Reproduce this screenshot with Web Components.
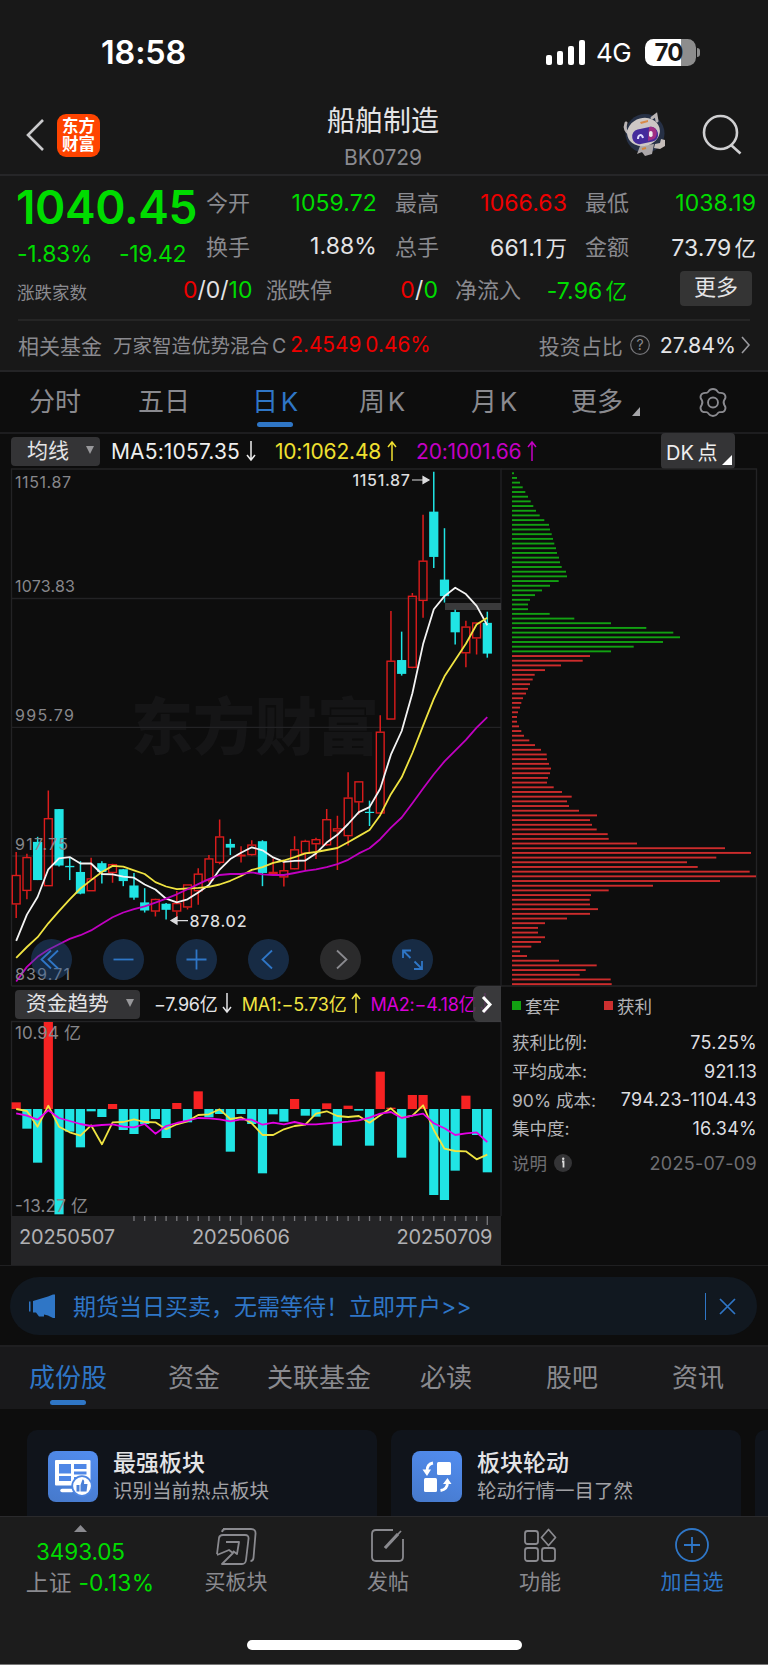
<!DOCTYPE html>
<html lang="zh-CN">
<head>
<meta charset="utf-8">
<title>船舶制造 BK0729</title>
<style>
  html, body { margin: 0; background: #0d0d0d; }
  body {
    width: 768px;
    height: 1665px;
    overflow: hidden;
    color: #e4e4e6;
    font-family: Inter, "Noto Sans CJK SC", sans-serif;
    font-size: 22px;
    --grey: #8a8a8f;
    --green: #00dc00;
    --red: #ee0000;
    --blue: #2f76c6;
    --line: #262628;
  }
</style>
</head>
<body>
<stock-page></stock-page>

<script>
// Tiny base class: every element below only has to say what it looks like
class Base extends HTMLElement {
  constructor() {
    super()
    this.attachShadow({ mode: 'open' })
  }
  connectedCallback() {
    this.shadowRoot.innerHTML = `
      <style>
        :host { display: block; box-sizing: border-box; white-space: nowrap; }
        svg { display: block; overflow: visible; }
        .g { color: var(--green); } .r { color: var(--red); }
        ${this.styles()}
      </style>
      ${this.template()}
    `
  }
  styles() { return '' }
  template() { return '' }
}

class StatusBar extends Base {
  styles() {
    return `
      :host { height: 80px; background: #181818; color: #fff; display: flex; align-items: center; padding: 24px 68px 0 101px; }
      time { font-size: 32.3px; font-weight: 600; flex: 1; letter-spacing: -.1px; }
      .net { font-size: 26px; width: 37px; margin: 0 12px 0 11px; letter-spacing: -.5px; }
      .battery { width: 51px; height: 27px; border-radius: 8.5px; background: linear-gradient(90deg, #fff 70%, #8d8d8d 70%); color: #181818; font-size: 24px; font-weight: 700; line-height: 27px; text-align: center; text-indent: -4px; letter-spacing: -.8px; }
      .tip { width: 3px; height: 9px; margin-left: 1px; border-radius: 0 4px 4px 0; background: #8d8d8d; }
    `
  }
  template() {
    return `
      <time>18:58</time>
      <svg width="39" height="25" fill="#fff">
        <rect x="0" y="15" width="6" height="10" rx="2"/><rect x="11" y="11" width="6" height="14" rx="2"/>
        <rect x="22" y="6" width="6" height="19" rx="2"/><rect x="33" y="0" width="6" height="25" rx="2"/>
      </svg>
      <span class="net">4G</span>
      <span class="battery">70</span><i class="tip"></i>
    `
  }
}

class PageNav extends Base {
  styles() {
    return `
      :host { height: 96px; background: #181818; border-bottom: 2px solid var(--line); display: grid; grid-template-columns: 57px 43px 1fr 42px 37px 65px; align-items: center; padding-top: 16px; }
      .back { margin-left: 25px; }
      .logo { width: 43px; height: 43px; border-radius: 9px; background: #ff4400; color: #fff; font-size: 16.5px; line-height: 18px; font-weight: 700; display: grid; place-content: center; text-align: center; }
      .title { text-align: center; margin-left: 102px; margin-right: 60px; }
      h1 { font-size: 28px; font-weight: 400; line-height: 34px; margin: 4px 0 0; }
      small { display: block; color: var(--grey); font-size: 21px; line-height: 24px; margin-top: 8px; letter-spacing: -.1px; }
    `
  }
  template() {
    return `
      <svg class="back" width="20" height="32" fill="none" stroke="#c9c9cb" stroke-width="2.6"><path d="M18 1 3 16l15 15"/></svg>
      <div class="logo"><span>东方</span><span>财富</span></div>
      <div class="title"><h1>船舶制造</h1><small>BK0729</small></div>
      <svg width="42" height="42" viewBox="0 0 42 42">
        <circle cx="21" cy="19.5" r="19.5" fill="#263045"/>
        <path d="M2 9c-2 5 0 9 4 11M28 4l4-3 1 6" fill="none" stroke="#b9b4b4" stroke-width="3" stroke-linecap="round"/>
        <path d="M16 32l-3 8 5-2 3 4 7-2 2-10z" fill="#aaa6a8"/>
        <path d="M31 30l5-1 1-4 4 1v6l-5 3-6-1z" fill="#c4bcb9"/>
        <ellipse cx="19.5" cy="18" rx="16.5" ry="14" transform="rotate(-15 19.5 18)" fill="#cdc7c5"/>
        <rect x="8" y="14" width="26" height="15" rx="7" transform="rotate(-12 21 21)" fill="#452b9c"/>
        <path d="M25 13c8-2 10 8 5 12l-6 2z" fill="#a02f84"/>
        <path d="M14 25c0-5 4-5 5-1" fill="none" stroke="#e0ddff" stroke-width="2"/>
        <rect x="25" y="17" width="3.6" height="6" rx="1.8" fill="#eee"/>
        <path d="M16 8l8-2v2l-7 2z" fill="#d98a4a"/>
        <path d="M18 35l4-1" stroke="#d3843a" stroke-width="2"/>
      </svg>
      <span></span>
      <svg width="40" height="42" fill="none" stroke="#cfcfd1" stroke-width="2.6"><circle cx="17.5" cy="18.5" r="16.5"/><path d="M28 31l9.500 8.500"/></svg>
    `
  }
}

class QuoteItem extends Base {
  styles() {
    return `
      :host { display: flex; justify-content: space-between; align-items: center; height: 43px; }
      span { color: var(--grey); font-size: 22px; padding-bottom: 3px; }
      b { font-weight: 400; font-size: 23px; letter-spacing: .1px; }
    `
  }
  template() {
    return `<span>${this.getAttribute('label')}</span><b><slot></slot></b>`
  }
}

class QuotePanel extends Base {
  styles() {
    return `
      :host { height: 194px; background: #181818; }
      .top { display: grid; grid-template-columns: 170px 171px 172px 171px; column-gap: 18px; padding: 5px 0 0 18px; height: 86px; }
      .price { grid-row: span 2; }
      .price strong { display: block; font-size: 46px; line-height: 50px; font-weight: 600; letter-spacing: -.4px; margin-left: -2px; margin-top: 1px; }
      .price div { display: flex; font-size: 23px; line-height: 28px; margin: 8px 0 0 -1px; letter-spacing: -.3px; }
      .price div span:first-child { width: 102px; }
      .u { margin-left: 3px; font-size: 21.5px; }
      .stats { display: grid; grid-template-columns: 166px 66px 17px 172px 17px 172px 1fr; height: 43px; align-items: center; padding: 1px 0 0 17px; }
      .stats > span { color: var(--grey); font-size: 17.5px; padding-top: 3px; }
      .counts { font-size: 23px; letter-spacing: 0; text-align: right; }
      .counts i { font-style: normal; }
      .btn { justify-self: end; margin: -2px 16px 0 0; width: 72px; height: 35px; border-radius: 4px; background: #343434; font-size: 22px; line-height: 32px; text-align: center; }
      .fund { margin: 8px 18px 0; border-top: 2px solid #252525; height: 47px; display: flex; align-items: center; color: var(--grey); font-size: 21px; }
      .fund > * { margin-bottom: 0; }
      .name { font-size: 19.5px; margin-left: 11px; }
      .name i { font-style: normal; margin-left: 3px; }
      .num { font-size: 20.8px; margin-left: 4px; letter-spacing: 0; }
      .q { margin: 0 10px 0 7px; }
      .pct { color: #e4e4e6; font-size: 21.4px; margin-right: 5px; }
      .space { flex: 1; }
    `
  }
  template() {
    return `
      <div class="top">
        <div class="price g"><strong>1040.45</strong><div><span>-1.83%</span><span>-19.42</span></div></div>
        <quote-item label="今开"><span class="g">1059.72</span></quote-item>
        <quote-item label="最高"><span class="r">1066.63</span></quote-item>
        <quote-item label="最低"><span class="g">1038.19</span></quote-item>
        <quote-item label="换手">1.88%</quote-item>
        <quote-item label="总手">661.1<span class="u">万</span></quote-item>
        <quote-item label="金额">73.79<span class="u">亿</span></quote-item>
      </div>
      <div class="stats">
        <span>涨跌家数</span>
        <div class="counts"><i class="r">0</i>/0/<i class="g">10</i></div>
        <i></i>
        <quote-item label="涨跌停"><span class="r">0</span>/<span class="g">0</span></quote-item>
        <i></i>
        <quote-item label="净流入"><span class="g">-7.96<span class="u">亿</span></span></quote-item>
        <div class="btn">更多</div>
      </div>
      <div class="fund">
        相关基金<span class="name">万家智造优势混合<i>C</i></span>
        <span class="num r">2.4549</span><span class="num r">0.46%</span>
        <span class="space"></span>投资占比
        <svg class="q" width="20" height="20" fill="none" stroke="#77777b" stroke-width="1.2"><circle cx="10" cy="10" r="9.300"/><text x="10" y="15" font-size="14" text-anchor="middle" fill="#8a8a8f" stroke="none">?</text></svg>
        <span class="pct">27.84%</span>
        <svg width="9" height="18" fill="none" stroke="#9a9a9e" stroke-width="1.6"><path d="M1 1l7 8-7 8"/></svg>
      </div>
    `
  }
}

// One tab used in both strips: the period row and the sections below the chart
class TabItem extends Base {
  styles() {
    return `
      :host { position: relative; color: var(--grey); font-size: 26px; line-height: 40px; word-spacing: -4.5px; }
      :host([active]) { color: var(--blue); }
      :host([active])::after { content: ""; position: absolute; left: calc(50% - 18px); bottom: var(--bar, -5px); width: 36px; height: 5.5px; border-radius: 3px; background: var(--blue); }
    `
  }
  template() { return '<slot></slot>' }
}

class PeriodTabs extends Base {
  styles() {
    return `
      :host { height: 64px; border-top: 2px solid #242426; border-bottom: 2px solid #1d1d1f; display: grid; grid-template-columns: 109px 114px 107px 112px 100px 126px 1fr; align-items: center; padding-left: 29px; }
      tab-item { justify-self: start; }
      .more { display: flex; }
      .more svg { margin: 25px 0 0 9px; }
    `
  }
  template() {
    return `
      <tab-item>分时</tab-item><tab-item>五日</tab-item><tab-item active>日 K</tab-item><tab-item>周 K</tab-item><tab-item>月 K</tab-item>
      <div class="more"><tab-item>更多</tab-item><svg width="8" height="9" fill="#a5a5a8"><path d="M8 0v9H0z"/></svg></div>
      <svg width="32" height="29" viewBox="0 0 30 28" fill="none" stroke="#8a8a8f" stroke-width="1.800" stroke-linejoin="round">
        <path d="M10.500 3.500Q12 1 15 1t4.500 2.500q.8 1.500 2.500 1.200 3.500-.2 4.500 2 1.300 2.500-.4 4.500-1.800 2.800 0 5.600 1.700 2 .4 4.500-1 2.200-4.500 2-1.700-.3-2.500 1.200Q18 27 15 27t-4.500-2.500q-.8-1.500-2.500-1.200-3.500.2-4.500-2-1.300-2.500.4-4.500 1.800-2.800 0-5.600-1.700-2-.4-4.500 1-2.200 4.500-2 1.700.3 2.500-1.200z"/>
        <circle cx="15" cy="14" r="4.800"/>
      </svg>
    `
  }
}

class DropButton extends Base {
  styles() {
    return `
      :host { display: flex; align-items: center; justify-content: space-between; height: 29px; line-height: 27px; border-radius: 4px; background: #343436; color: #e4e4e6; padding: 0 6px 2px var(--pad, 16px); }
    `
  }
  template() {
    return '<slot></slot><svg width="8" height="8" fill="#98989b"><path d="M0 0h8L4 8z"/></svg>'
  }
}

const arrow = (up, color) => `<svg width="10" height="20" fill="none" stroke="${color}" stroke-width="1.500"><path d="${up ? 'M5 20V1M1 6l4-5 4 5' : 'M5 0v19M1 14l4 5 4-5'}"/></svg>`

class MaBar extends Base {
  styles() {
    return `
      :host { height: 34px; display: flex; align-items: center; padding-left: 11px; font-size: 21px; }
      drop-button { width: 89px; margin-right: 11px; }
      .v { display: flex; align-items: center; gap: 6px; letter-spacing: -.2px; }
      .v + .v { margin-left: 19px; }
      .v.first { letter-spacing: .15px; }
      .dk { margin-left: auto; margin-right: 33px; width: 74px; height: 36px; background: #343436; border-radius: 4px; display: flex; align-items: center; box-sizing: border-box; padding-left: 5px; color: #eee; font-size: 20px; gap: 4px; word-spacing: -2px; }
      .dk svg { margin-top: 18px; }
    `
  }
  template() {
    return `
      <drop-button>均线</drop-button>
      <span class="v first" style="color:#eee">MA5:1057.35${arrow(false, '#eee')}</span>
      <span class="v" style="color:#f0e030">10:1062.48${arrow(true, '#f0e030')}</span>
      <span class="v" style="color:#c400c4">20:1001.66${arrow(true, '#c400c4')}</span>
      <span class="dk">DK 点<svg width="10" height="10" fill="#fff"><path d="M10 0v10H0z"/></svg></span>
    `
  }
}

// x of the n-th trading day
const dayX = i => 16.2 + i * 10.707
const CYAN = '#20e4e4'
const line = (ys, toY, color, w = 1.8) =>
  `<polyline fill="none" stroke="${color}" stroke-width="${w}" stroke-linejoin="round" points="${ys.map((y, i) => `${dayX(i).toFixed(1)},${toY(y).toFixed(1)}`).join(' ')}"/>`

// up/down, high, body top, body bottom, low
const CANDLES = [
  ['u',1145,1213,1300,1340],['u',1150,1160,1260,1285],['d',1100,1115,1228,1228],['u',963,1045,1246,1246],['d',1018,1018,1185,1188],
  ['d',1162,1186,1190,1228],['d',1172,1204,1268,1270],['u',1162,1223,1261,1261],['d',1172,1178,1204,1238],['u',1180,1181,1207,1236],
  ['d',1195,1196,1231,1246],['d',1207,1244,1280,1286],['d',1252,1294,1318,1324],['u',1283,1284,1321,1336],['d',1296,1298,1316,1345],
  ['u',1260,1296,1321,1343],['u',1241,1241,1309,1315],['u',1193,1209,1261,1301],['u',1154,1164,1230,1235],['u',1049,1099,1177,1181],
  ['d',1106,1121,1132,1154],['u',1128,1153,1157,1176],['u',1110,1123,1154,1155],['d',1110,1113,1207,1246],['u',1164,1204,1210,1215],
  ['u',1170,1199,1220,1247],['u',1098,1137,1196,1197],['u',1109,1112,1150,1200],['u',1103,1107,1122,1166],['u',1018,1048,1125,1127],
  ['u',1038,1075,1084,1198],['u',909,984,1098,1126],['u',936,936,998,1034],['d',993,1026,1028,1068],['u',740,789,1031,1031],
  ['u',432,579,753,753],['d',493,577,618,623],['u',379,387,600,601],['u',147,283,402,452],['d',20,138,272,305],
  ['d',187,339,388,407],['d',428,435,495,531],['u',461,478,557,598],['u',465,466,513,561],['d',434,467,558,570],
]
const MA5 = [1408,1330,1278,1196,1164,1160,1179,1179,1210,1211,1218,1221,1241,1256,1283,1294,1285,1265,1243,1197,1166,1147,1131,1140,1161,1174,1171,1170,1149,1117,1094,1062,1027,1012,958,857,787,675,530,427,388,363,382,417,474]
const MA10 = [1458,1426,1397,1356,1320,1285,1253,1228,1204,1186,1188,1199,1210,1234,1247,1255,1253,1251,1248,1241,1230,1216,1198,1190,1177,1170,1160,1149,1145,1139,1133,1116,1098,1080,1036,974,924,852,771,692,625,577,529,472,452]
const MA20 = [1528,1485,1455,1434,1418,1402,1391,1377,1357,1338,1324,1314,1306,1295,1283,1270,1255,1240,1225,1213,1210,1210,1205,1211,1213,1213,1207,1201,1196,1190,1181,1168,1149,1134,1107,1073,1043,1001,957,915,877,845,813,777,746]

class KChart extends Base {
  styles() {
    return `
      :host { height: 518px; position: relative; }
      .tools { position: absolute; left: 31px; bottom: 6px; display: flex; gap: 31.3px; }
      .tools svg { width: 41px; height: 41px; border-radius: 50%; background: rgba(40, 90, 153, .4); stroke: #2f76c6; fill: none; stroke-width: 1.8; }
      .tools svg.off { background: rgba(90, 90, 92, .4); stroke: #8a8a8f; }
      text { font-family: Inter, "Noto Sans CJK SC", sans-serif; }
    `
  }
  y(v) { return 465 + v / 2.9585 }
  candle([dir, high, top, bottom, low], i) {
    const x = dayX(i), [h, t, b, l] = [high, top, bottom, low].map(this.y)
    if(dir === 'd') {
      return `<path d="M${x} ${h}V${l}" stroke="${CYAN}" stroke-width="1.500"/><rect x="${x - 4.6}" y="${t}" width="9.200" height="${Math.max(b - t, 1.2)}" fill="${CYAN}"/>`
    }
    return `<path d="M${x} ${h}V${t}M${x} ${b}V${l}" stroke="#dc1c1c" stroke-width="1.500"/><rect x="${x - 3.9}" y="${t + .5}" width="7.800" height="${Math.max(b - t - 1, .6)}" fill="none" stroke="#dc1c1c" stroke-width="1.400"/>`
  }
  template() {
    const labels = [['1151.87',482,56],['1073.83',586.3,60],['995.79',715.5,59],['917.75',844.6,53],['839.71',973.7,55]]
    return `
      <svg width="501" height="518" viewBox="0 468 501 518">
        <text x="131" y="750" font-size="62" font-weight="900" textLength="248" fill="#151516">东方财富</text>
        <path d="M11.500 986V469H501V986M11.500 598.500H501M11.500 727.300H501M11.500 856H501M11.500 986H501" fill="none" stroke="#232325" stroke-width="1.300"/>
        <rect x="445" y="603" width="56" height="7" fill="#3a3a3b"/>
        ${CANDLES.map((c, i) => this.candle(c, i)).join('')}
        ${line(MA5, this.y, '#f4f4f4')}${line(MA10, this.y, '#f0e442')}${line(MA20, this.y, '#c000c0')}
        ${labels.map(([t, y, w]) => `<text x="15" y="${y + 5.8}" font-size="16" textLength="${w}" fill="#87878b">${t}</text>`).join('')}
        <g font-size="16" font-weight="500" fill="#dcdcde">
          <text x="352.500" y="486" textLength="57.500">1151.87</text><text x="189.500" y="926.500" textLength="57">878.02</text>
          <path d="M412 480h11v-3.500l6 3.500-6 3.500V480M188 920.600h-11v-3.500l-6 3.500 6 3.500v-3.500" stroke="#dcdcde" stroke-width="1.200"/>
        </g>
      </svg>
      <div class="tools">
        <svg><path d="M20 11.500l-9.500 9 9.500 9M27 11.500l-9.500 9 9.500 9"/></svg>
        <svg><path d="M10.500 20.500h20"/></svg>
        <svg><path d="M10.500 20.500h20M20.500 10.500v20"/></svg>
        <svg><path d="M24 11.500l-9.500 9 9.500 9"/></svg>
        <svg class="off"><path d="M17 11.500l9.500 9-9.500 9"/></svg>
        <svg><path d="M11 19v-7.500h8M11.500 12l7 7M30 22v8h-8M29.500 29.500l-7-7"/></svg>
      </div>
    `
  }
}

const FLOW = [367,446,548,126,703,455,502,394,411,372,450,462,432,417,474,369,427,334,412,402,515,402,432,580,403,425,357,407,410,370,497,377,392,497,275,383,533,345,345,645,660,572,347,465,577]
const FLOW_MA1 = [387,393,440,377,440,457,467,436,493,427,426,418,426,427,448,433,424,405,403,388,417,412,430,465,465,448,438,434,401,394,408,411,408,428,406,385,414,407,376,450,506,513,514,538,524]
const FLOW_MA2 = [400,407,419,391,414,423,432,438,435,433,440,442,432,461,438,429,422,414,415,418,424,418,419,434,428,433,426,433,433,430,428,425,421,413,401,396,414,407,401,430,445,465,460,457,486]

class FlowChart extends Base {
  styles() {
    return `
      .head { height: 36px; display: flex; align-items: center; padding-left: 15px; font-size: 18px; overflow: hidden; position: relative; width: 486px; }
      drop-button { --pad: 11px; width: 125px; font-size: 20.7px; margin-right: 14px; }
      .v { display: flex; align-items: center; gap: 4px; letter-spacing: -.2px; margin-top: -2px; }
      .v + .v { margin-left: 10px; }
      .next { position: absolute; right: 0; top: 0; width: 28px; height: 36px; background: #414143dd; border-radius: 6px 0 0 6px; display: grid; place-content: center; }
      text { font-family: Inter, "Noto Sans CJK SC", sans-serif; }
    `
  }
  y(v) { return 980 + v / 3 }
  template() {
    const ticks = FLOW.map((_, i) => i < 11 ? '' : `M${dayX(i)} 1216v${i === 21 || i === 44 ? 9 : 5}`).join('')
    return `
      <div class="head">
        <drop-button>资金趋势</drop-button>
        <span class="v" style="color:#e4e4e6">−7.96亿${arrow(false, '#e4e4e6')}</span>
        <span class="v" style="color:#f0e442">MA1:−5.73亿${arrow(true, '#f0e442')}</span>
        <span class="v" style="color:#d800d8">MA2:−4.18亿${arrow(false, '#d800d8')}</span>
        <div class="next"><svg width="10" height="17" fill="none" stroke="#fff" stroke-width="3"><path d="M1 1l7 7.500-7 7.500"/></svg></div>
      </div>
      <svg width="501" height="243" viewBox="0 1022 501 243">
        <path d="M11.500 1216V1021.500H501V1216" fill="none" stroke="#232325" stroke-width="1.300"/>
        ${FLOW.map((v, i) => `<rect x="${dayX(i) - 4.6}" y="${this.y(Math.min(v, 387))}" width="9.200" height="${Math.abs(v - 387) / 3}" fill="${v < 387 ? '#f62222' : CYAN}"/>`).join('')}
        ${line(FLOW_MA1, this.y, '#f0e442')}${line(FLOW_MA2, this.y, '#e600e6')}
        <g font-size="17" fill="#87878b"><text x="15" y="1038.500" textLength="66">10.94 亿</text><text x="15" y="1212" textLength="73">-13.27 亿</text></g>
        <rect x="11" y="1216" width="490" height="49" fill="#242426"/>
        <path d="${ticks}" stroke="#77777b" stroke-width="1.300"/>
        <g font-size="20" fill="#b0b0b3"><text x="19" y="1244" textLength="96">20250507</text><text x="192" y="1244" textLength="98">20250606</text><text x="396.500" y="1244" textLength="96">20250709</text></g>
      </svg>
    `
  }
}

// Right ends of the cost distribution bars, top to bottom
const CHIPS = [
  42,51,60,68,76,84,92,100,108,119,133,147,150,155,159,163,168,171,177,180,185,198,201,176,150,126,105,90,84,84,149,223,333,439,520,540,489,401,333,
  270,248,183,135,104,98,90,84,78,69,64,60,54,51,51,57,64,
  72,88,105,123,140,141,147,153,150,144,141,161,186,215,201,207,237,291,270,276,290,323,326,411,675,753,649,561,593,749,768,660,459,326,273,269,270,294,270,201,135,114,114,135,123,94,60,81,177,290,257,239,332,335,
]
const TRAPPED = 39

class ChipPanel extends Base {
  styles() {
    return `
      .body { padding: 0 11px 0 11px; font-size: 17.5px; color: #b4b4b7; }
      .legend { height: 38px; display: flex; align-items: center; }
      .legend i { width: 9px; height: 9px; background: #12a112; margin-right: 4px; }
      .legend span + i { background: #cc3030; margin: 0 4px 0 44px; }
      .row { height: 28.7px; display: flex; justify-content: space-between; align-items: center; }
      .row > span { margin-top: -1px; }
      .row b { font-weight: 400; font-size: 18px; color: #dedee0; letter-spacing: .25px; }
      .list { padding-top: 4px; }
      .note { margin-top: 6px; color: #6e6e72; }
      .note b { color: #6e6e72; letter-spacing: .3px; }
      .note span { display: flex; align-items: center; gap: 7px; }
    `
  }
  template() {
    const bars = CHIPS.map((end, i) => `<rect x="512" y="${(472.3 + i * 4.687).toFixed(2)}" width="${((end - 36) / 3).toFixed(1)}" height="1.900" fill="${i < TRAPPED ? '#12a112' : '#cc2c2c'}"/>`)
    const rows = [['获利比例:', '75.25%'], ['平均成本:', '921.13'], ['90% 成本:', '794.23-1104.43'], ['集中度:', '16.34%']]
    return `
      <svg width="267" height="518" viewBox="501 468 267 518">
        <path d="M501 469H756.500V986H501" fill="none" stroke="#232325" stroke-width="1.300"/>
        ${bars.join('')}
      </svg>
      <div class="body">
        <div class="legend"><i></i><span>套牢</span><i></i><span>获利</span></div>
        <div class="list">${rows.map(([k, v]) => `<div class="row"><span>${k}</span><b>${v}</b></div>`).join('')}</div>
        <div class="row note">
          <span>说明<svg width="18" height="18"><circle cx="9" cy="9" r="9" fill="#343436"/><path d="M8 7.500h1.500v6" stroke="#ddd" stroke-width="1.800" fill="none"/><circle cx="9.200" cy="4.800" r="1.200" fill="#ddd"/></svg></span>
          <b>2025-07-09</b>
        </div>
      </div>
    `
  }
}

class PromoBanner extends Base {
  styles() {
    return `
      :host { height: 80px; border-top: 1px solid #1f1f21; padding: 11px 11px 0 10px; }
      .pill { height: 58px; border-radius: 29px; background: #111820; color: var(--blue); display: flex; align-items: center; padding: 0 22px 0 18px; font-size: 23px; }
      .text { margin: -2px 0 0 17px; flex: 1; }
      .sep { width: 1.5px; height: 27px; background: var(--blue); margin-right: 14px; }
    `
  }
  template() {
    return `
      <div class="pill">
        <svg width="28" height="24" fill="#2f76c6"><path d="M1 7.500h1.500v10H1zM5 7l15-4.500 5-2h2V24h-2l-5-2.500-4-1v2h-5l-3-4H5z"/></svg>
        <span class="text">期货当日买卖，无需等待！立即开户&gt;&gt;</span>
        <i class="sep"></i>
        <svg width="15" height="15" stroke="#2f76c6" stroke-width="1.700"><path d="M0 0l15 15M15 0L0 15"/></svg>
      </div>
    `
  }
}

class SectionTabs extends Base {
  styles() {
    return `
      :host { height: 64px; background: #19191b; border-top: 2px solid #1f1f21; display: grid; grid-template-columns: 139px 99px 153px 126px 126px 1fr; place-items: start; padding: 11px 0 0 29px; --bar: -7px; }
    `
  }
  template() {
    return '<tab-item active>成份股</tab-item><tab-item>资金</tab-item><tab-item>关联基金</tab-item><tab-item>必读</tab-item><tab-item>股吧</tab-item><tab-item>资讯</tab-item>'
  }
}

class FeatureCard extends Base {
  styles() {
    return `
      :host { flex: none; width: 350px; height: 120px; border-radius: 10px; background: #10141b; display: flex; padding: 21px 0 0 21px; }
      .icon { width: 50px; height: 51px; border-radius: 8px; background: linear-gradient(20deg, #4679cb, #528df0); margin-right: 15px; }
      .icon.empty { background: none; }
      .title { display: block; font-size: 23px; line-height: 28px; font-weight: 500; margin-top: -2px; color: #e4e4e6; }
      .sub { display: block; font-size: 19.5px; line-height: 28px; color: #a2a2a6; }
    `
  }
  template() {
    const heading = this.getAttribute('heading')
    return `
      <div class="icon ${heading ? '' : 'empty'}"><slot name="icon"></slot></div>
      <div><span class="title">${heading || ''}</span><span class="sub"><slot></slot></span></div>
    `
  }
}

class FeatureCards extends Base {
  styles() {
    return `
      :host { height: 107px; padding: 21px 0 0 27px; display: flex; gap: 14px; overflow: hidden; }
    `
  }
  template() {
    return `
      <feature-card heading="最强板块">
        <svg slot="icon" width="50" height="51">
          <rect x="7" y="9" width="35.500" height="25.500" rx="1" fill="#fff"/>
          <path d="M11 13h12v9.500H11zM11 25h12v5H11zM26 13h12.500v5H26zM26 20.500h12.500v3H26zM26 26h12.500v4H26z" fill="#4f87e6"/>
          <path d="M14 39.500h10" stroke="#fff" stroke-width="3.500" stroke-linecap="round"/>
          <circle cx="34" cy="35" r="9.800" fill="#fff" stroke="#4e86e2" stroke-width="1.800"/>
          <path d="M28.500 34h3v6.500h-3zM32.500 34l2-5.500q2.300 0 1.500 4.500h3.500l-1 7.500h-6z" fill="#4b80d8"/>
        </svg>
        识别当前热点板块
      </feature-card>
      <feature-card heading="板块轮动">
        <svg slot="icon" width="50" height="51" fill="#fff">
          <rect x="25" y="11" width="14" height="13" rx="1.500"/><rect x="12" y="27" width="13" height="14" rx="1.500"/>
          <path d="M21 12q-6 1-6 8M28.500 39.500q7-1 7-8" fill="none" stroke="#fff" stroke-width="2.800"/>
          <path d="M10.500 18.500h8.500L15 25zM31 33h8.500L35.500 27z"/>
        </svg>
        轮动行情一目了然
      </feature-card>
      <feature-card></feature-card>
    `
  }
}

class ToolItem extends Base {
  styles() {
    return `
      :host { width: 152px; display: flex; flex-direction: column; align-items: center; color: var(--grey); font-size: 21px; }
      :host([primary]) { color: var(--blue); }
      .icon { height: 42px; padding-top: 11px; }
      span { line-height: 26px; margin-top: -1px; }
    `
  }
  template() { return `<div class="icon"><slot name="icon"></slot></div><span><slot></slot></span>` }
}

class BottomBar extends Base {
  styles() {
    return `
      :host { height: 149px; background: #1c1c1c; border-top: 1px solid #2a2a2c; border-bottom: 1px solid #777; position: relative; display: flex; }
      svg { fill: none; stroke: currentColor; stroke-width: 1.8; stroke-linejoin: round; }
      .index { width: 160px; padding-top: 8px; text-align: center; }
      .index svg { margin: 0 auto; fill: var(--grey); stroke: none; }
      .val { display: block; line-height: 26px; font-size: 22.5px; margin: 7px 0 0 1px; letter-spacing: -.1px; }
      .row { display: block; line-height: 30px; font-size: 22.8px; color: var(--grey); padding-left: 20px; margin-top: 3px; letter-spacing: .2px; }
      .home { position: absolute; left: 247px; bottom: 14px; width: 275px; height: 10px; border-radius: 5px; background: #fff; }
    `
  }
  template() {
    return `
      <div class="index">
        <svg width="13" height="7"><path d="M6.500 0L13 7H0z"/></svg>
        <span class="val g">3493.05</span><span class="row">上证 <span class="g">-0.13%</span></span>
      </div>
      <tool-item><svg slot="icon" width="42" height="37"><path d="M8 1l28 0q5 0 4.500 5l-2 24q-.5 3-3 3M7 4q.5-3 4-3M2 26L4 10q.5-3 4-3h22q4 0 3.500 4l-2.500 21q-.5 4-4 4H7l11-11-4-3L2 27M11 14h13l-2 12-4-3"/></svg>买板块</tool-item>
      <tool-item><svg slot="icon" width="34" height="34"><path d="M22 2H5Q1 2 1 6v23q0 4 4 4h23q4 0 4-4V11M14 20L30 3" /><path d="M14 20L27 6" stroke-width="3.200"/></svg>发帖</tool-item>
      <tool-item><svg slot="icon" width="32" height="34"><rect x="1" y="3" width="13" height="13" rx="2.500"/><rect x="1" y="20" width="13" height="13" rx="2.500"/><rect x="18" y="20" width="13" height="13" rx="2.500"/><path d="M24.500 1.500l7 8-7 8-7-8z"/></svg>功能</tool-item>
      <tool-item primary><svg slot="icon" width="34" height="34"><circle cx="17" cy="17" r="16"/><path d="M17 9v16M9 17h16"/></svg>加自选</tool-item>
      <i class="home"></i>
    `
  }
}

class StockPage extends Base {
  styles() {
    return `
      :host { height: 1665px; overflow: hidden; }
      .charts { display: grid; grid-template-columns: 501px 267px; height: 797px; }
    `
  }
  template() {
    return `
      <status-bar></status-bar>
      <page-nav></page-nav>
      <quote-panel></quote-panel>
      <period-tabs></period-tabs>
      <ma-bar></ma-bar>
      <div class="charts">
        <div><k-chart></k-chart><flow-chart></flow-chart></div>
        <chip-panel></chip-panel>
      </div>
      <promo-banner></promo-banner>
      <section-tabs></section-tabs>
      <feature-cards></feature-cards>
      <bottom-bar></bottom-bar>
    `
  }
}

customElements.define('status-bar', StatusBar)
customElements.define('page-nav', PageNav)
customElements.define('quote-item', QuoteItem)
customElements.define('quote-panel', QuotePanel)
customElements.define('tab-item', TabItem)
customElements.define('period-tabs', PeriodTabs)
customElements.define('drop-button', DropButton)
customElements.define('ma-bar', MaBar)
customElements.define('k-chart', KChart)
customElements.define('flow-chart', FlowChart)
customElements.define('chip-panel', ChipPanel)
customElements.define('promo-banner', PromoBanner)
customElements.define('section-tabs', SectionTabs)
customElements.define('feature-card', FeatureCard)
customElements.define('feature-cards', FeatureCards)
customElements.define('tool-item', ToolItem)
customElements.define('bottom-bar', BottomBar)
customElements.define('stock-page', StockPage)
</script>
</body>
</html>
